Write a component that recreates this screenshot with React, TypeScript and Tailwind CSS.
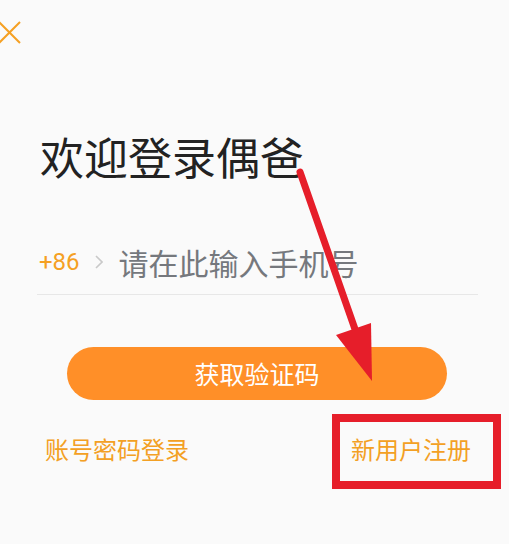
const cjk = { fontFamily: '"Noto Sans CJK SC", "Noto Sans", sans-serif' };

export default function App() {
  return (
    <div
      className="relative h-[544px] w-full overflow-hidden bg-[#fafafa]"
      style={cjk}
    >
      {/* close */}
      <div className="pt-[21px]">
        <svg width="22" height="23" viewBox="0 0 22 23" className="block">
          <path
            d="M-1 1 L20 22 M20 1 L-1 22"
            stroke="#f5a023"
            strokeWidth="2"
            fill="none"
          />
        </svg>
      </div>

      <h1 className="ml-[40px] mt-[90px] text-[44px] leading-none font-normal text-[#222]">
        欢迎登录偶爸
      </h1>

      <div className="ml-[37px] mt-[52px] flex h-[65px] w-[441px] items-center border-b border-[#e7e7e7]">
        <span
          className="ml-[2px] text-[24px] leading-none text-[#f5a023]"
          style={{ fontFamily: '"Roboto", "Noto Sans", sans-serif' }}
        >
          +86
        </span>
        <svg width="8" height="14" viewBox="0 0 8 14" className="ml-[15px]">
          <path
            d="M1 1 L7 7 L1 13"
            fill="none"
            stroke="#c9c9c9"
            strokeWidth="1.6"
          />
        </svg>
        <span className="ml-[16px] text-[30px] leading-none text-[#75787d]">
          请在此输入手机号
        </span>
      </div>

      <button className="ml-[67px] mt-[52px] flex h-[53px] w-[380px] items-center justify-center rounded-full bg-[#ff8f28] text-[25px] leading-none text-white">
        获取验证码
      </button>

      <div className="mt-[37px] flex justify-between pl-[45px] pr-[38px] text-[24px] leading-none text-[#f3a024]">
        <a>账号密码登录</a>
        <a>新用户注册</a>
      </div>

      {/* annotation overlay */}
      <div className="absolute left-[332px] top-[414px] h-[75px] w-[169px] border-[8px] border-[#e61e2a]" />
      <svg
        className="pointer-events-none absolute left-0 top-0"
        width="509"
        height="544"
      >
        <line
          x1="300"
          y1="172"
          x2="356"
          y2="332"
          stroke="#e61e2a"
          strokeWidth="7"
          strokeLinecap="round"
        />
        <polygon points="336,335 371,323 372,381" fill="#e61e2a" />
      </svg>
    </div>
  );
}
